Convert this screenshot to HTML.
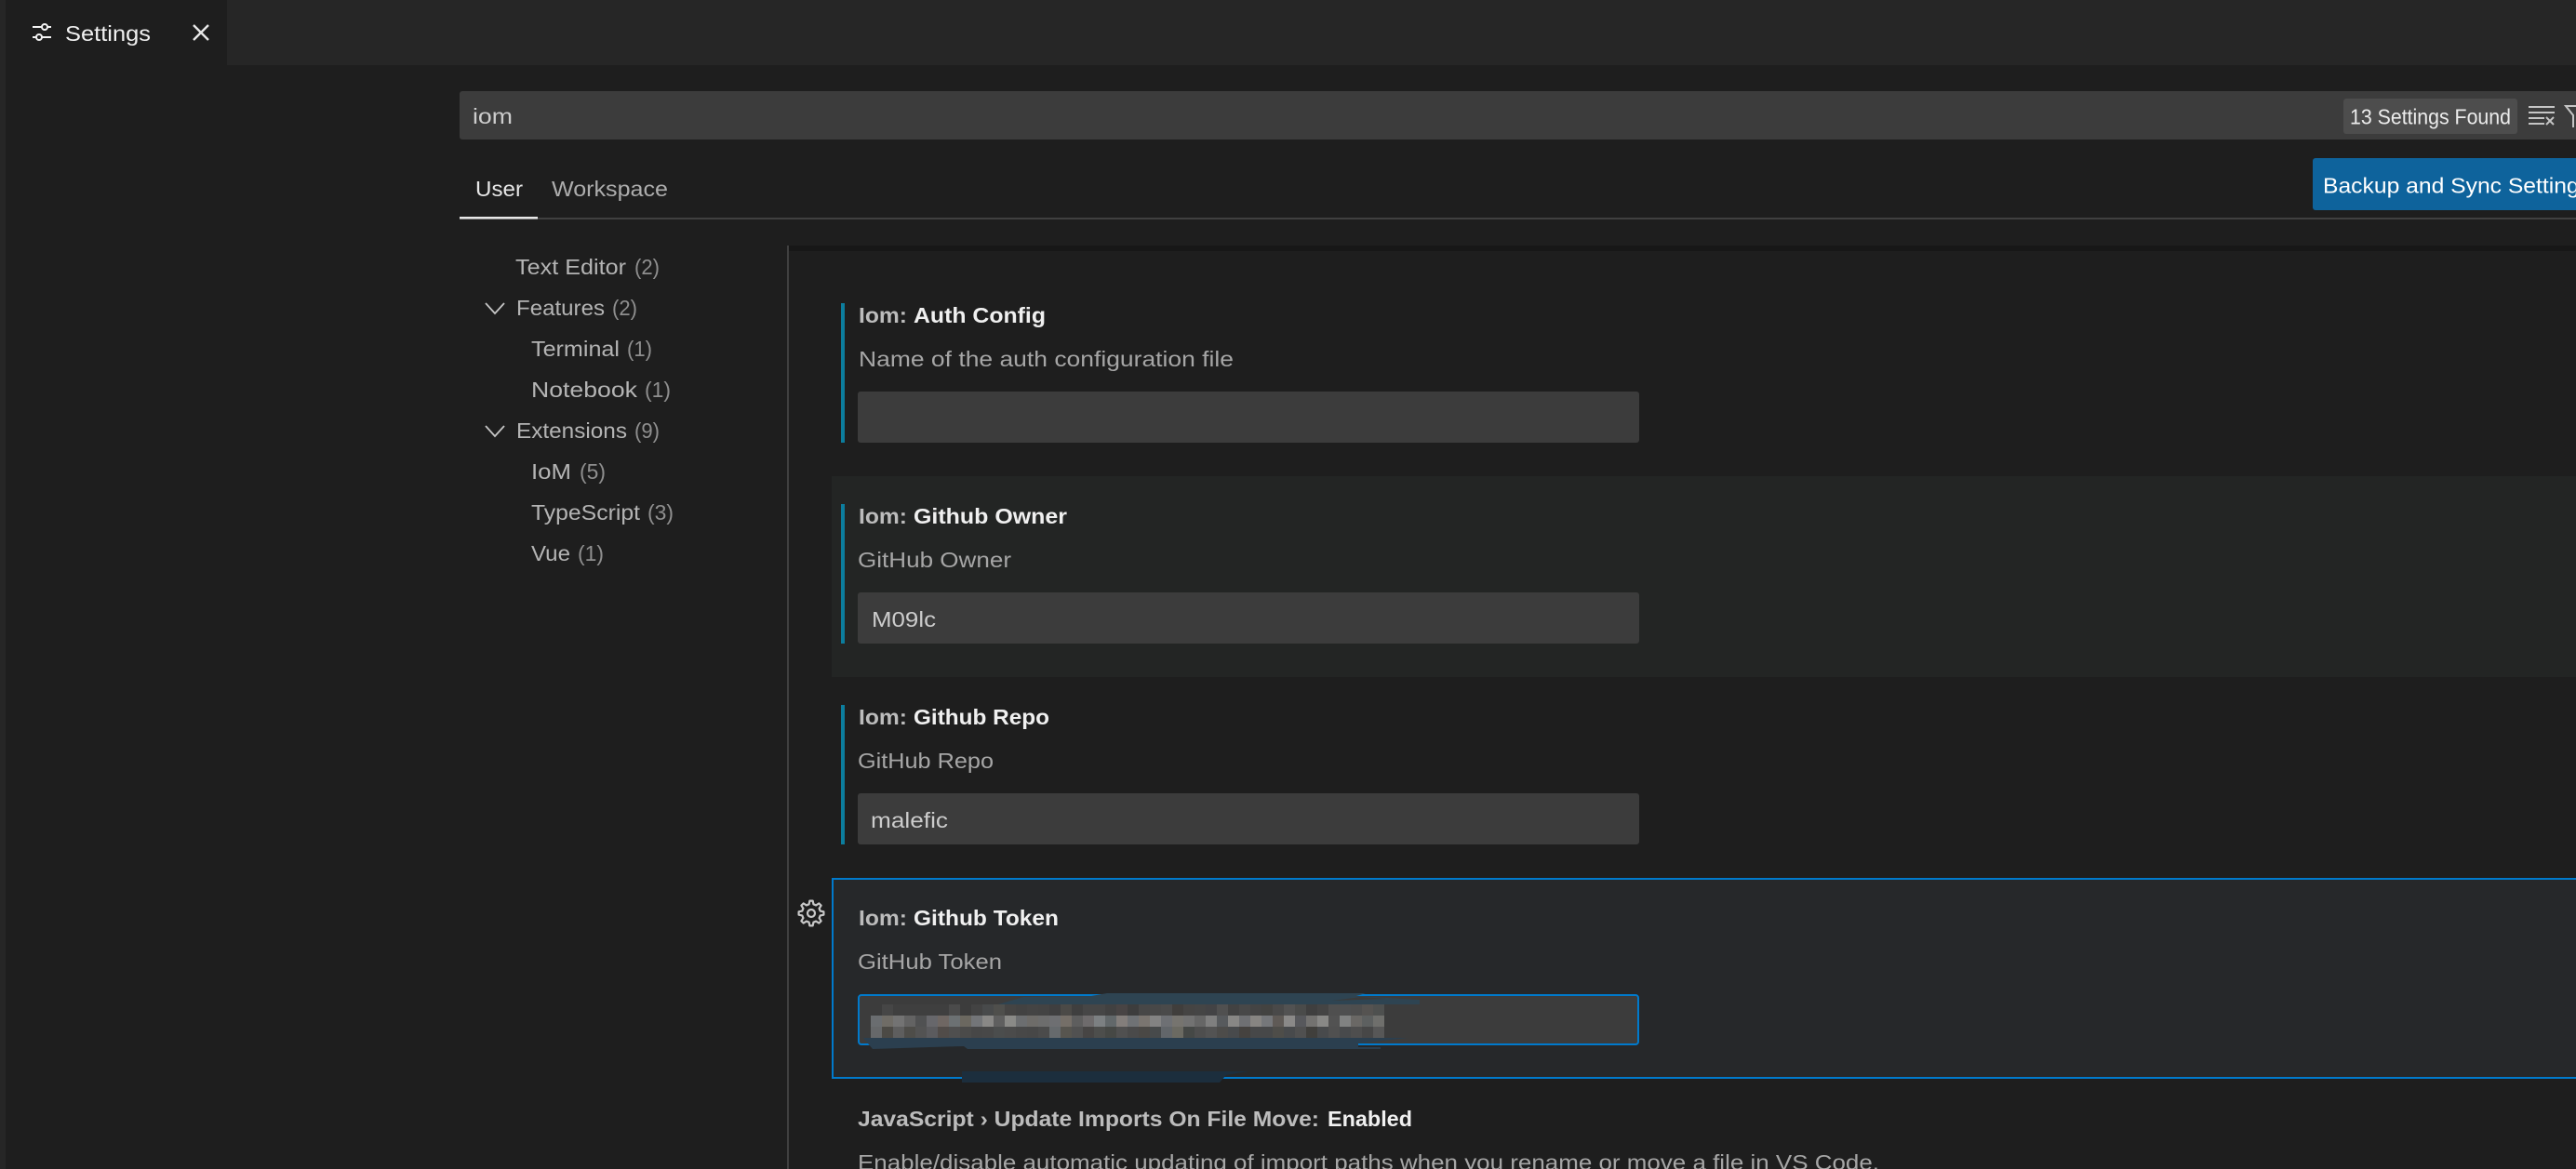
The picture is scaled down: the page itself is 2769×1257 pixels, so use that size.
<!DOCTYPE html>
<html lang="en">
<head>
<meta charset="utf-8">
<title>Settings</title>
<style>
html,body{margin:0;padding:0;width:2769px;height:1257px;overflow:hidden;background:#1e1e1e}
svg{display:block}
text{font-family:"Liberation Sans",sans-serif;font-size:23.5px}
.t{fill:#b4b4b4}
.c{fill:#8f8f8f}
.h{fill:#bcbcbc;font-weight:bold}
.b{fill:#f0f0f0;font-weight:bold}
.d{fill:#a6a6a6}
.p rect{width:12px;height:12px}
</style>
</head>
<body>
<svg xmlns="http://www.w3.org/2000/svg" width="2769" height="1257" viewBox="0 0 2769 1257">
<rect width="2769" height="1257" fill="#1e1e1e"/>
<rect x="0" y="0" width="6" height="1257" fill="#262626"/>
<rect x="244" y="0" width="2525" height="70" fill="#262626"/>

<!-- tab -->
<g stroke="#f2f2f2" stroke-width="2" fill="none">
<line x1="35" y1="29" x2="55" y2="29"/><circle cx="48" cy="29" r="3" fill="#1e1e1e"/>
<line x1="35" y1="40" x2="55" y2="40"/><circle cx="42" cy="40" r="3" fill="#1e1e1e"/>
</g>
<text x="70" y="44" textLength="92" lengthAdjust="spacingAndGlyphs" fill="#f0f0f0">Settings</text>
<path d="M208 27L224 43M224 27L208 43" stroke="#e8e8e8" stroke-width="2.4" fill="none"/>

<!-- search -->
<rect x="494" y="98" width="2300" height="52" rx="3" fill="#3c3c3c"/>
<text x="508" y="133" textLength="43" lengthAdjust="spacingAndGlyphs" fill="#cccccc">iom</text>
<rect x="2519" y="106" width="187" height="38" rx="3" fill="#4d4d4d"/>
<text x="2526" y="133.5" textLength="173" lengthAdjust="spacingAndGlyphs" fill="#ececec">13 Settings Found</text>
<path d="M2718 115H2746M2718 121H2746M2718 127H2735M2718 133H2735M2737 126L2745 134M2745 126L2737 134" stroke="#c5c5c5" stroke-width="2" fill="none"/>
<path d="M2771 114H2758L2766 124V137" stroke="#c5c5c5" stroke-width="2" fill="none"/>

<!-- tabs -->
<text x="511" y="211" textLength="51" lengthAdjust="spacingAndGlyphs" fill="#e7e7e7">User</text>
<text x="593" y="211" textLength="125" lengthAdjust="spacingAndGlyphs" fill="#adadad">Workspace</text>
<rect x="494" y="234" width="2275" height="2" fill="#404040"/>
<rect x="494" y="233" width="84" height="2.5" fill="#e7e7e7"/>
<rect x="2486" y="170" width="300" height="56" rx="3" fill="#0e639c"/>
<text x="2497" y="207.5" textLength="288" lengthAdjust="spacingAndGlyphs" fill="#ffffff">Backup and Sync Settings</text>

<!-- tree -->
<text class="t" x="554" y="295" textLength="119" lengthAdjust="spacingAndGlyphs">Text Editor</text><text class="c" x="682" y="295" textLength="27" lengthAdjust="spacingAndGlyphs">(2)</text>
<text class="t" x="555" y="339" textLength="95" lengthAdjust="spacingAndGlyphs">Features</text><text class="c" x="658" y="339" textLength="27" lengthAdjust="spacingAndGlyphs">(2)</text>
<text class="t" x="571" y="383" textLength="95" lengthAdjust="spacingAndGlyphs">Terminal</text><text class="c" x="674" y="383" textLength="27" lengthAdjust="spacingAndGlyphs">(1)</text>
<text class="t" x="571" y="427" textLength="114" lengthAdjust="spacingAndGlyphs">Notebook</text><text class="c" x="693" y="427" textLength="28" lengthAdjust="spacingAndGlyphs">(1)</text>
<text class="t" x="555" y="471" textLength="119" lengthAdjust="spacingAndGlyphs">Extensions</text><text class="c" x="682" y="471" textLength="27" lengthAdjust="spacingAndGlyphs">(9)</text>
<text class="t" x="571" y="515" textLength="43" lengthAdjust="spacingAndGlyphs">IoM</text><text class="c" x="623" y="515" textLength="28" lengthAdjust="spacingAndGlyphs">(5)</text>
<text class="t" x="571" y="559" textLength="117" lengthAdjust="spacingAndGlyphs">TypeScript</text><text class="c" x="696" y="559" textLength="28" lengthAdjust="spacingAndGlyphs">(3)</text>
<text class="t" x="571" y="603" textLength="42" lengthAdjust="spacingAndGlyphs">Vue</text><text class="c" x="621" y="603" textLength="28" lengthAdjust="spacingAndGlyphs">(1)</text>
<path d="M522 326L532 337L542 326M522 458L532 469L542 458" stroke="#c5c5c5" stroke-width="1.8" fill="none"/>

<!-- list frame -->
<rect x="846" y="264" width="2" height="993" fill="#404040"/>
<rect x="848" y="264" width="1921" height="6" fill="#171717"/>

<!-- row 1 -->
<rect x="904" y="326" width="4" height="150" fill="#0c7d9d"/>
<text class="h" x="923" y="347" textLength="52" lengthAdjust="spacingAndGlyphs">Iom:</text>
<text class="b" x="982" y="347" textLength="142" lengthAdjust="spacingAndGlyphs">Auth Config</text>
<text class="d" x="923" y="394" textLength="403" lengthAdjust="spacingAndGlyphs">Name of the auth configuration file</text>
<rect x="922" y="421" width="840" height="55" rx="3" fill="#3c3c3c"/>

<!-- row 2 -->
<rect x="894" y="512" width="1875" height="216" fill="#232524"/>
<rect x="904" y="542" width="4" height="150" fill="#0c7d9d"/>
<text class="h" x="923" y="563" textLength="52" lengthAdjust="spacingAndGlyphs">Iom:</text>
<text class="b" x="982" y="563" textLength="165" lengthAdjust="spacingAndGlyphs">Github Owner</text>
<text class="d" x="922" y="610" textLength="165" lengthAdjust="spacingAndGlyphs">GitHub Owner</text>
<rect x="922" y="637" width="840" height="55" rx="3" fill="#3c3c3c"/>
<text x="937" y="674" textLength="69" lengthAdjust="spacingAndGlyphs" fill="#cccccc">M09lc</text>

<!-- row 3 -->
<rect x="904" y="758" width="4" height="150" fill="#0c7d9d"/>
<text class="h" x="923" y="779" textLength="52" lengthAdjust="spacingAndGlyphs">Iom:</text>
<text class="b" x="982" y="779" textLength="146" lengthAdjust="spacingAndGlyphs">Github Repo</text>
<text class="d" x="922" y="826" textLength="146" lengthAdjust="spacingAndGlyphs">GitHub Repo</text>
<rect x="922" y="853" width="840" height="55" rx="3" fill="#3c3c3c"/>
<text x="936" y="890" textLength="83" lengthAdjust="spacingAndGlyphs" fill="#cccccc">malefic</text>

<!-- row 4 focused -->
<rect x="894" y="944" width="1875" height="216" fill="#26282a"/>
<rect x="894" y="944" width="1875" height="2" fill="#007acc"/>
<rect x="894" y="1158" width="1875" height="2" fill="#007acc"/>
<rect x="894" y="944" width="2" height="216" fill="#007acc"/>
<polygon transform="translate(872 982)" fill="none" stroke="#c8c8c8" stroke-width="2.2" stroke-linejoin="round" points="9.7,-2.42 13.4,-1.65 13.4,1.65 9.7,2.42 8.57,5.15 10.64,8.31 8.31,10.64 5.15,8.57 2.42,9.7 1.65,13.4 -1.65,13.4 -2.42,9.7 -5.15,8.57 -8.31,10.64 -10.64,8.31 -8.57,5.15 -9.7,2.42 -13.4,1.65 -13.4,-1.65 -9.7,-2.42 -8.57,-5.15 -10.64,-8.31 -8.31,-10.64 -5.15,-8.57 -2.42,-9.7 -1.65,-13.4 1.65,-13.4 2.42,-9.7 5.15,-8.57 8.31,-10.64 10.64,-8.31 8.57,-5.15"/>
<circle cx="872" cy="982" r="4" fill="none" stroke="#c8c8c8" stroke-width="2.2"/>
<text class="h" x="923" y="995" textLength="52" lengthAdjust="spacingAndGlyphs">Iom:</text>
<text class="b" x="982" y="995" textLength="156" lengthAdjust="spacingAndGlyphs">Github Token</text>
<text class="d" x="922" y="1042" textLength="155" lengthAdjust="spacingAndGlyphs">GitHub Token</text>
<rect x="923" y="1070" width="838" height="53" rx="3" fill="#3c3c3c" stroke="#007acc" stroke-width="2"/>

<!-- pixelated token -->
<g class="p">
<rect x="948" y="1080" fill="#464646"/><rect x="960" y="1080" fill="#3f3f3f"/><rect x="972" y="1080" fill="#3f3f3f"/><rect x="984" y="1080" fill="#3f3f3f"/><rect x="996" y="1080" fill="#3f3f3f"/><rect x="1008" y="1080" fill="#3f3f3f"/><rect x="1020" y="1080" fill="#4b4b4b"/><rect x="1032" y="1080" fill="#3c3c3c"/><rect x="1044" y="1080" fill="#434343"/><rect x="1056" y="1080" fill="#484a4b"/><rect x="1068" y="1080" fill="#4f4f4c"/><rect x="1080" y="1080" fill="#454443"/><rect x="1092" y="1080" fill="#424242"/><rect x="1104" y="1080" fill="#444444"/><rect x="1116" y="1080" fill="#434343"/><rect x="1128" y="1080" fill="#3f3f40"/><rect x="1140" y="1080" fill="#4b4a47"/><rect x="1152" y="1080" fill="#3f3f3f"/><rect x="1164" y="1080" fill="#464646"/><rect x="1176" y="1080" fill="#464646"/><rect x="1188" y="1080" fill="#414141"/><rect x="1200" y="1080" fill="#484444"/><rect x="1212" y="1080" fill="#3d3d3d"/><rect x="1224" y="1080" fill="#474747"/><rect x="1236" y="1080" fill="#484848"/><rect x="1248" y="1080" fill="#4a4a4a"/><rect x="1260" y="1080" fill="#403e3c"/><rect x="1272" y="1080" fill="#454443"/><rect x="1284" y="1080" fill="#454545"/><rect x="1296" y="1080" fill="#434345"/><rect x="1308" y="1080" fill="#505050"/><rect x="1320" y="1080" fill="#424242"/><rect x="1332" y="1080" fill="#484848"/><rect x="1344" y="1080" fill="#444444"/><rect x="1356" y="1080" fill="#434341"/><rect x="1368" y="1080" fill="#494949"/><rect x="1380" y="1080" fill="#525252"/><rect x="1392" y="1080" fill="#4a4b4a"/><rect x="1404" y="1080" fill="#3f3f3f"/><rect x="1416" y="1080" fill="#444444"/><rect x="1428" y="1080" fill="#4f4f4f"/><rect x="1440" y="1080" fill="#4e4f50"/><rect x="1452" y="1080" fill="#4e4e4e"/><rect x="1464" y="1080" fill="#555351"/><rect x="1476" y="1080" fill="#4e504f"/>
<rect x="936" y="1092" fill="#6a6d70"/><rect x="948" y="1092" fill="#6f6c66"/><rect x="960" y="1092" fill="#737373"/><rect x="972" y="1092" fill="#636363"/><rect x="984" y="1092" fill="#505152"/><rect x="996" y="1092" fill="#67676b"/><rect x="1008" y="1092" fill="#6f6763"/><rect x="1020" y="1092" fill="#6c7173"/><rect x="1032" y="1092" fill="#6b6860"/><rect x="1044" y="1092" fill="#737578"/><rect x="1056" y="1092" fill="#898886"/><rect x="1068" y="1092" fill="#5f5f5f"/><rect x="1080" y="1092" fill="#8a8a87"/><rect x="1092" y="1092" fill="#6c6e70"/><rect x="1104" y="1092" fill="#6e6c69"/><rect x="1116" y="1092" fill="#6d6d6d"/><rect x="1128" y="1092" fill="#6e6f72"/><rect x="1140" y="1092" fill="#756f68"/><rect x="1152" y="1092" fill="#5e5e5e"/><rect x="1164" y="1092" fill="#6e6b6c"/><rect x="1176" y="1092" fill="#7c8082"/><rect x="1188" y="1092" fill="#62686a"/><rect x="1200" y="1092" fill="#837e7b"/><rect x="1212" y="1092" fill="#6f7275"/><rect x="1224" y="1092" fill="#7a7570"/><rect x="1236" y="1092" fill="#838383"/><rect x="1248" y="1092" fill="#6e7074"/><rect x="1260" y="1092" fill="#76746f"/><rect x="1272" y="1092" fill="#727272"/><rect x="1284" y="1092" fill="#666666"/><rect x="1296" y="1092" fill="#7f7f7f"/><rect x="1308" y="1092" fill="#575a5d"/><rect x="1320" y="1092" fill="#888785"/><rect x="1332" y="1092" fill="#6f7073"/><rect x="1344" y="1092" fill="#878582"/><rect x="1356" y="1092" fill="#75777a"/><rect x="1368" y="1092" fill="#5f5a56"/><rect x="1380" y="1092" fill="#8a8988"/><rect x="1392" y="1092" fill="#57585c"/><rect x="1404" y="1092" fill="#737270"/><rect x="1416" y="1092" fill="#888886"/><rect x="1428" y="1092" fill="#525252"/><rect x="1440" y="1092" fill="#808282"/><rect x="1452" y="1092" fill="#6a6865"/><rect x="1464" y="1092" fill="#5d6060"/><rect x="1476" y="1092" fill="#6f6f6c"/>
<rect x="936" y="1104" fill="#66686a"/><rect x="948" y="1104" fill="#4c4a45"/><rect x="960" y="1104" fill="#5e5e5e"/><rect x="972" y="1104" fill="#4e4d49"/><rect x="984" y="1104" fill="#535353"/><rect x="996" y="1104" fill="#5b5b5e"/><rect x="1008" y="1104" fill="#514c49"/><rect x="1020" y="1104" fill="#4f4f4f"/><rect x="1032" y="1104" fill="#4b4b4a"/><rect x="1044" y="1104" fill="#474747"/><rect x="1056" y="1104" fill="#484848"/><rect x="1068" y="1104" fill="#4b4d4d"/><rect x="1080" y="1104" fill="#4b4b4b"/><rect x="1092" y="1104" fill="#484848"/><rect x="1104" y="1104" fill="#474747"/><rect x="1116" y="1104" fill="#4b4b4b"/><rect x="1128" y="1104" fill="#666a6d"/><rect x="1140" y="1104" fill="#57554f"/><rect x="1152" y="1104" fill="#515151"/><rect x="1164" y="1104" fill="#474544"/><rect x="1176" y="1104" fill="#4d4e4c"/><rect x="1188" y="1104" fill="#464845"/><rect x="1200" y="1104" fill="#505050"/><rect x="1212" y="1104" fill="#4a4a4a"/><rect x="1224" y="1104" fill="#4a4845"/><rect x="1236" y="1104" fill="#474a4b"/><rect x="1248" y="1104" fill="#62666a"/><rect x="1260" y="1104" fill="#6b6a62"/><rect x="1272" y="1104" fill="#454846"/><rect x="1284" y="1104" fill="#4e4e4e"/><rect x="1296" y="1104" fill="#535353"/><rect x="1308" y="1104" fill="#4d4c4a"/><rect x="1320" y="1104" fill="#484a4c"/><rect x="1332" y="1104" fill="#45423f"/><rect x="1344" y="1104" fill="#474849"/><rect x="1356" y="1104" fill="#474849"/><rect x="1368" y="1104" fill="#4e4d49"/><rect x="1380" y="1104" fill="#484a4c"/><rect x="1392" y="1104" fill="#505050"/><rect x="1404" y="1104" fill="#403f3c"/><rect x="1416" y="1104" fill="#484a4c"/><rect x="1428" y="1104" fill="#505050"/><rect x="1440" y="1104" fill="#484a4c"/><rect x="1452" y="1104" fill="#4e4e4e"/><rect x="1464" y="1104" fill="#474747"/><rect x="1476" y="1104" fill="#575757"/>
</g>
<!-- smears -->
<polygon fill="#2e4452" points="1073,1080 1100,1072 1173,1071 1190,1068 1468,1068 1458,1071 1526,1075 1526,1080"/>
<polygon fill="#3a3a3a" points="1432,1076 1463,1072 1490,1074"/>
<polygon fill="#2b3f4f" points="928,1116 1513,1116 1460,1122 1460,1126 1484,1126 1484,1128 1040,1128 1036,1125 1000,1126 938,1128"/>
<polygon fill="#1c2e3d" points="1034,1152 1342,1152 1318,1156 1311,1164 1034,1164"/>

<!-- row 5 -->
<text class="h" x="922" y="1211" textLength="496" lengthAdjust="spacingAndGlyphs">JavaScript › Update Imports On File Move:</text>
<text class="b" x="1427" y="1211" textLength="91" lengthAdjust="spacingAndGlyphs">Enabled</text>
<text class="d" x="922" y="1258" textLength="1098" lengthAdjust="spacingAndGlyphs">Enable/disable automatic updating of import paths when you rename or move a file in VS Code.</text>
</svg>
</body>
</html>
